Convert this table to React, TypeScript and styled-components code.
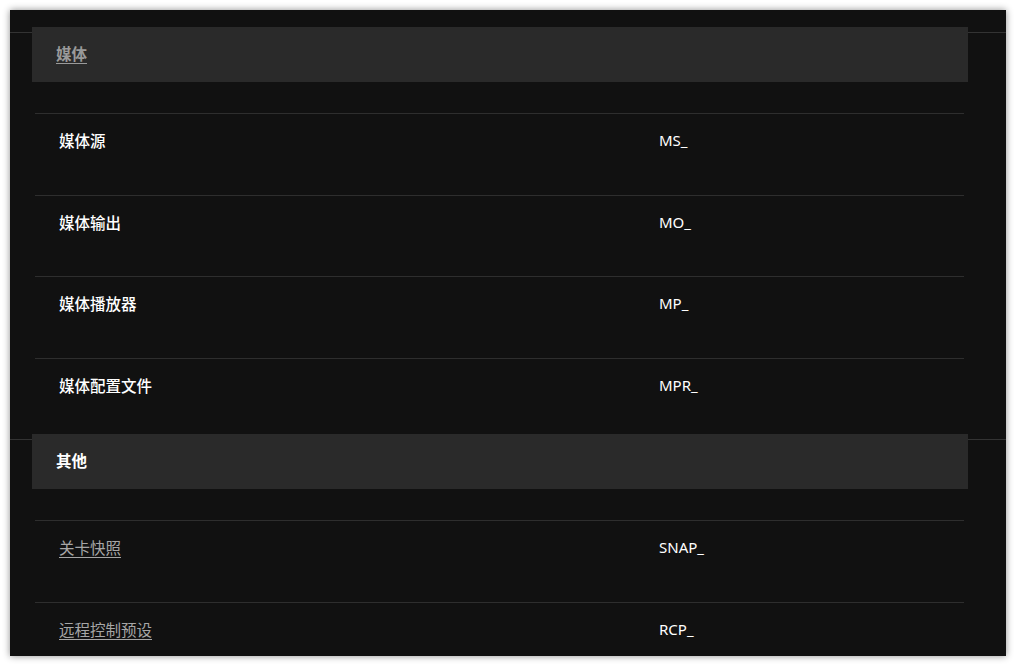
import React from "react";
import styled, { createGlobalStyle } from "styled-components";

const GlobalStyle = createGlobalStyle`
  html, body {
    margin: 0;
    padding: 0;
    background: #ffffff;
  }
  body {
    font-family: "Noto Sans", "Noto Sans CJK SC", sans-serif;
    font-size: 14px;
  }
`;

const Page = styled.div`
  padding: 10px;
  width: 1016px;
  height: 666px;
  box-sizing: border-box;
  overflow: hidden;
`;

const Panel = styled.div`
  width: 996px;
  height: 646px;
  background: #111111;
  box-shadow: 0 0 7px rgba(0, 0, 0, 0.45);
  overflow: hidden;
  padding-top: 22px;
  box-sizing: border-box;
`;

const Section = styled.section`
  border-top: 1px solid #333333;
`;

const SectionHeader = styled.div`
  margin: -6px 0 0 22px;
  width: 936px;
  height: 55px;
  background: #2a2a2a;
  display: flex;
  align-items: center;
  padding: 0 24px 3px;
  box-sizing: border-box;
`;

const HeaderTitle = styled.span<{ $link?: boolean }>`
  font-family: "Noto Sans CJK SC", sans-serif;
  font-weight: 700;
  font-size: 15.5px;
  color: ${(p) => (p.$link ? "#9a9a9a" : "#ffffff")};
  text-decoration: ${(p) => (p.$link ? "underline" : "none")};
  text-underline-offset: 3px;
`;

const Table = styled.div`
  margin-left: 25px;
  width: 929px;
  padding-top: 31px;
`;

const Row = styled.div`
  display: grid;
  grid-template-columns: 600px 1fr;
  height: 81.6px;
  border-top: 1px solid #2e2e2e;
  box-sizing: border-box;
  padding: 16px 24px 0;
  line-height: 21px;
`;

const Label = styled.span<{ $link?: boolean }>`
  font-family: "Noto Sans CJK SC", sans-serif;
  font-size: 15.5px;
  font-weight: ${(p) => (p.$link ? 400 : 500)};
  color: ${(p) => (p.$link ? "#a6a6a6" : "#ffffff")};
  text-decoration: ${(p) => (p.$link ? "underline" : "none")};
  text-underline-offset: 3px;
`;

const Code = styled.span`
  font-family: "Noto Sans", sans-serif;
  font-size: 15px;
  color: #ffffff;
`;

type Item = { name: string; code: string; link?: boolean };

const sections: { title: string; link?: boolean; items: Item[] }[] = [
  {
    title: "媒体",
    link: true,
    items: [
      { name: "媒体源", code: "MS_" },
      { name: "媒体输出", code: "MO_" },
      { name: "媒体播放器", code: "MP_" },
      { name: "媒体配置文件", code: "MPR_" },
    ],
  },
  {
    title: "其他",
    items: [
      { name: "关卡快照", code: "SNAP_", link: true },
      { name: "远程控制预设", code: "RCP_", link: true },
    ],
  },
];

export default function App() {
  return (
    <Page>
      <GlobalStyle />
      <Panel>
        {sections.map((s) => (
          <Section key={s.title}>
            <SectionHeader>
              <HeaderTitle $link={s.link}>{s.title}</HeaderTitle>
            </SectionHeader>
            <Table>
              {s.items.map((it) => (
                <Row key={it.code}>
                  <Label $link={it.link}>{it.name}</Label>
                  <Code>{it.code}</Code>
                </Row>
              ))}
            </Table>
          </Section>
        ))}
      </Panel>
    </Page>
  );
}
